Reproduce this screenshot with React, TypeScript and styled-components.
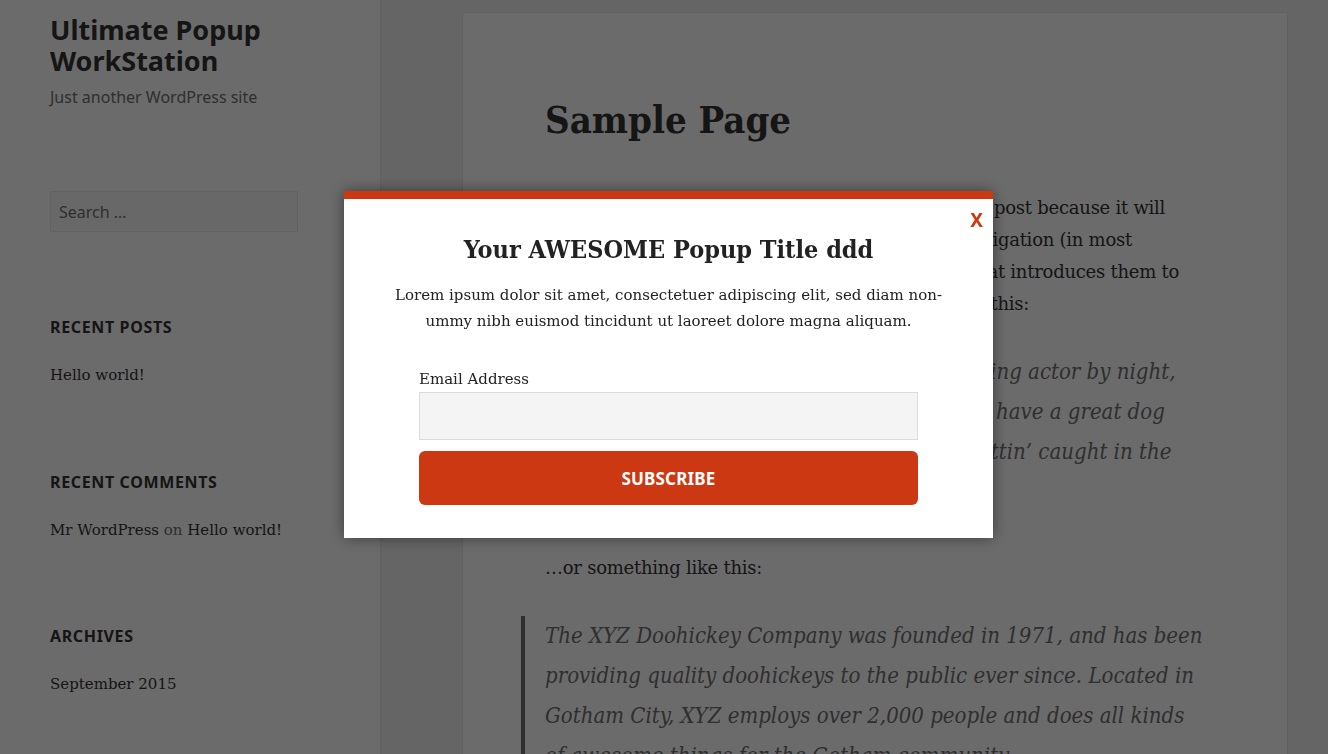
import React from "react";
import styled, { createGlobalStyle } from "styled-components";

const SERIF = `"DejaVu Serif", "Liberation Serif", serif`;
const SERIF_COND = `"DejaVu Serif Condensed", "DejaVu Serif", "Liberation Serif", serif`;
const SANS = `"Noto Sans", "Open Sans", sans-serif`;
const RED = "#cb3812";

const GlobalStyle = createGlobalStyle`
  html, body { margin: 0; padding: 0; }
  body {
    background: #f1f1f1;
    font-family: ${SERIF};
    color: #333;
    overflow: hidden;
    width: 1328px;
    height: 754px;
  }
  * { box-sizing: border-box; }
`;

const Page = styled.div`
  display: flex;
  align-items: flex-start;
  height: 754px;
  overflow: hidden;
`;

const Sidebar = styled.aside`
  flex: 0 0 380px;
  height: 754px;
  background: #fff;
  box-shadow: 0 0 1px rgba(0, 0, 0, 0.25);
  padding: 14px 0 0 50px;
  display: flex;
  flex-direction: column;
`;

const SiteTitle = styled.h1`
  margin: 0;
  font-family: ${SANS};
  font-weight: 700;
  font-size: 27px;
  line-height: 31px;
  color: #333;
`;

const Tagline = styled.p`
  margin: 10px 0 0;
  font-family: ${SANS};
  font-size: 16px;
  line-height: 22px;
  color: #707070;
`;

const SearchBox = styled.div`
  margin-top: 83px;
  width: 248px;
  height: 41px;
  border: 1px solid #eaeaea;
  background: #f7f7f7;
  font-family: ${SANS};
  font-size: 16px;
  color: #707070;
  display: flex;
  align-items: center;
  padding-left: 8px;
`;

const Widget = styled.section<{ $top: number }>`
  margin-top: ${(p) => p.$top}px;
  display: flex;
  flex-direction: column;
  gap: 28px;
`;

const WidgetTitle = styled.h2`
  margin: 0;
  font-family: ${SANS};
  font-weight: 700;
  font-size: 16px;
  line-height: 20px;
  letter-spacing: 0.04em;
  text-transform: uppercase;
  color: #333;
`;

const WidgetItem = styled.div`
  font-family: ${SERIF};
  font-size: 15px;
  line-height: 20px;
  color: #333;
`;

const Muted = styled.span`
  color: #707070;
`;

const Main = styled.main`
  flex: 1;
  padding: 13px 41px 0 83px;
`;

const Card = styled.article`
  background: #fff;
  box-shadow: 0 0 1px rgba(0, 0, 0, 0.25);
  padding: 83px 82px 0 82px;
  height: 760px;
`;

const EntryTitle = styled.h1`
  margin: 0 0 48px;
  font-family: ${SERIF_COND};
  font-stretch: condensed;
  font-weight: 700;
  font-size: 38px;
  line-height: 48px;
  color: #333;
`;

const Para = styled.p`
  margin: 0 0 32px;
  font-size: 18px;
  line-height: 32px;
  letter-spacing: -0.25px;
  color: #333;
`;

const Quote = styled.blockquote`
  margin: 0 0 40px -24px;
  padding-left: 20px;
  border-left: 4px solid #707070;
  font-family: ${SERIF_COND};
  font-stretch: condensed;
  font-style: italic;
  font-size: 22px;
  line-height: 40px;
  color: #707070;
`;

const Overlay = styled.div`
  position: fixed;
  inset: 0;
  background: rgba(0, 0, 0, 0.58);
  display: flex;
  align-items: flex-start;
  padding: 191px 0 0 344px;
`;

const Popup = styled.div`
  position: relative;
  width: 649px;
  height: 347px;
  background: #fff;
  border-top: 8px solid ${RED};
  box-shadow: 0 0 14px rgba(0, 0, 0, 0.45);
  padding: 36px 75px 0;
  display: flex;
  flex-direction: column;
  align-items: center;
`;

const Close = styled.span`
  position: absolute;
  top: 9px;
  right: 10px;
  font-family: ${SANS};
  font-weight: 700;
  font-size: 19px;
  line-height: 24px;
  color: ${RED};
`;

const PopupTitle = styled.h2`
  margin: 0;
  font-family: ${SERIF_COND};
  font-stretch: condensed;
  font-weight: 700;
  font-size: 25px;
  line-height: 30px;
  color: #222;
  text-align: center;
`;

const PopupText = styled.p`
  margin: 17px 0 0;
  font-size: 15px;
  line-height: 26px;
  color: #222;
  text-align: center;
  white-space: nowrap;
`;

const Form = styled.form`
  align-self: stretch;
  margin-top: 34px;
  display: flex;
  flex-direction: column;
`;

const Label = styled.label`
  font-size: 15px;
  line-height: 22px;
  color: #222;
`;

const Input = styled.input`
  margin-top: 2px;
  height: 48px;
  width: 100%;
  background: #f4f4f4;
  border: 1px solid #dcdcdc;
  outline: none;
`;

const Button = styled.button`
  margin-top: 11px;
  height: 54px;
  width: 100%;
  border: none;
  border-radius: 6px;
  background: ${RED};
  color: #fff;
  font-family: ${SANS};
  font-weight: 700;
  font-size: 17px;
  letter-spacing: 0.01em;
  text-transform: uppercase;
`;

export default function App() {
  return (
    <>
      <GlobalStyle />
      <Page>
        <Sidebar>
          <SiteTitle>
            Ultimate Popup
            <br />
            WorkStation
          </SiteTitle>
          <Tagline>Just another WordPress site</Tagline>
          <SearchBox>Search …</SearchBox>
          <Widget $top={85}>
            <WidgetTitle>Recent Posts</WidgetTitle>
            <WidgetItem>Hello world!</WidgetItem>
          </Widget>
          <Widget $top={87}>
            <WidgetTitle>Recent Comments</WidgetTitle>
            <WidgetItem>
              Mr WordPress <Muted>on</Muted> Hello world!
            </WidgetItem>
          </Widget>
          <Widget $top={86}>
            <WidgetTitle>Archives</WidgetTitle>
            <WidgetItem>September 2015</WidgetItem>
          </Widget>
        </Sidebar>
        <Main>
          <Card>
            <EntryTitle>Sample Page</EntryTitle>
            <Para>
              This is an example page. It’s different from a blog post because it will
              stay in one place and will show up in your site navigation (in most
              themes). Most people start with an About page that introduces them to
              potential site visitors. It might say something like this:
            </Para>
            <Quote>
              Hi there! I’m a bike messenger by day, aspiring actor by night, and this is
              my website. I live in Los Angeles, have a great dog named Jack, and I like
              piña coladas. (And gettin’ caught in the rain.)
            </Quote>
            <Para>…or something like this:</Para>
            <Quote>
              The XYZ Doohickey Company was founded in 1971, and has been providing
              quality doohickeys to the public ever since. Located in Gotham City, XYZ
              employs over 2,000 people and does all kinds of awesome things for the
              Gotham community.
            </Quote>
          </Card>
        </Main>
      </Page>
      <Overlay>
        <Popup>
          <Close>X</Close>
          <PopupTitle>Your AWESOME Popup Title ddd</PopupTitle>
          <PopupText>
            Lorem ipsum dolor sit amet, consectetuer adipiscing elit, sed diam non-
            <br />
            ummy nibh euismod tincidunt ut laoreet dolore magna aliquam.
          </PopupText>
          <Form>
            <Label>Email Address</Label>
            <Input type="text" />
            <Button type="button">Subscribe</Button>
          </Form>
        </Popup>
      </Overlay>
    </>
  );
}
